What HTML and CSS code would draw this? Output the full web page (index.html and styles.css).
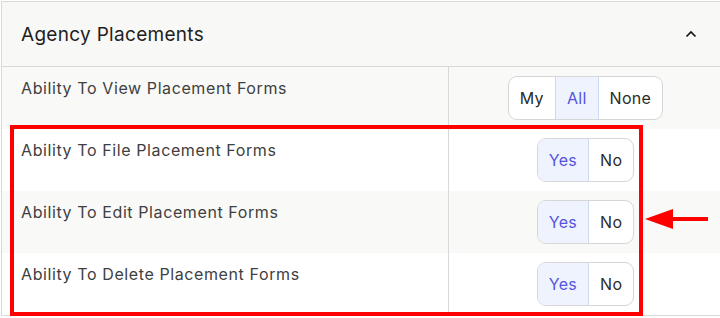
FILE: index.html
```html
<!DOCTYPE html>
<html lang="en">

<head>
    <meta charset="UTF-8">
    <title>Agency Placements</title>
    <link rel="stylesheet" href="styles.css">
</head>

<body>
    <div class="panel">
        <div class="panel_head">
            <span class="panel_title">Agency Placements</span>
            <svg class="chevron" width="12" height="8" viewBox="0 0 12 8">
                <path d="M1.5 6.5 L6 2 L10.5 6.5" fill="none" stroke="#111" stroke-width="1.6" />
            </svg>
        </div>
        <div class="row">
            <div class="label">Ability To View Placement Forms</div>
            <div class="cell">
                <div class="seg">
                    <span>My</span>
                    <span class="on">All</span>
                    <span>None</span>
                </div>
            </div>
        </div>
        <div class="row">
            <div class="label">Ability To File Placement Forms</div>
            <div class="cell">
                <div class="seg">
                    <span class="on">Yes</span>
                    <span>No</span>
                </div>
            </div>
        </div>
        <div class="row">
            <div class="label">Ability To Edit Placement Forms</div>
            <div class="cell">
                <div class="seg">
                    <span class="on">Yes</span>
                    <span>No</span>
                </div>
            </div>
        </div>
        <div class="row">
            <div class="label">Ability To Delete Placement Forms</div>
            <div class="cell">
                <div class="seg">
                    <span class="on">Yes</span>
                    <span>No</span>
                </div>
            </div>
        </div>
    </div>

    <!-- annotation drawn over the screenshot -->
    <div class="mark_box"></div>
    <svg class="mark_arrow" width="66" height="24" viewBox="0 0 66 24">
        <polygon points="0,11 28,1 28,21" fill="#ff0000" />
        <rect x="26" y="9" width="37" height="4" fill="#ff0000" />
    </svg>
</body>

</html>
```

FILE: styles.css
```css
* {
    padding: 0;
    margin: 0;
    box-sizing: border-box;
}

body {
    background: #fff;
    font-family: "Inter", "Open Sans", sans-serif;
    overflow: hidden;
    position: relative;
    width: 720px;
    height: 318px;
}

.panel {
    margin: 1px 0 0 1px;
    width: 721px;
    border-top: 1px solid #d9d9d9;
    border-left: 1px solid #d9d9d9;
    border-bottom: 1px solid #d9d9d9;
}

.panel_head {
    height: 65px;
    background: #f8f8f6;
    border-bottom: 1px solid #d9d9d9;
    display: flex;
    align-items: center;
    justify-content: space-between;
    padding: 0 25px 0 19px;
}

.panel_title {
    font-size: 19px;
    letter-spacing: 0.3px;
    color: #1e1e1e;
}

.chevron {
    display: block;
}

.row {
    height: 62px;
    display: flex;
    background: #fff;
}

.row:nth-child(even) {
    background: #f9f9f7;
}

.label {
    width: 447px;
    border-right: 1px solid #d9d9d9;
    padding: 11px 0 0 19px;
    font-size: 16px;
    letter-spacing: 0.6px;
    line-height: 20px;
    color: #404040;
}

.cell {
    flex: 1;
    display: flex;
    align-items: center;
    justify-content: center;
}

.seg {
    display: flex;
    height: 44px;
    border: 1px solid #d6d6d6;
    border-radius: 9px;
    overflow: hidden;
    background: #fff;
}

.seg span {
    display: flex;
    align-items: center;
    padding: 0 11px;
    font-size: 16px;
    letter-spacing: 0.3px;
    color: #2b2b2b;
}

.seg span + span {
    border-left: 1px solid #d6d6d6;
}

.seg span.on {
    background: #eef3fd;
    color: #5553e0;
}

.seg span.on,
.seg span.on + span {
    border-left-color: #cdd8f2;
}

.mark_box {
    position: absolute;
    left: 10px;
    top: 125px;
    width: 633px;
    height: 191px;
    border: 4px solid #ff0000;
}

.mark_arrow {
    position: absolute;
    left: 645px;
    top: 208px;
}
```
